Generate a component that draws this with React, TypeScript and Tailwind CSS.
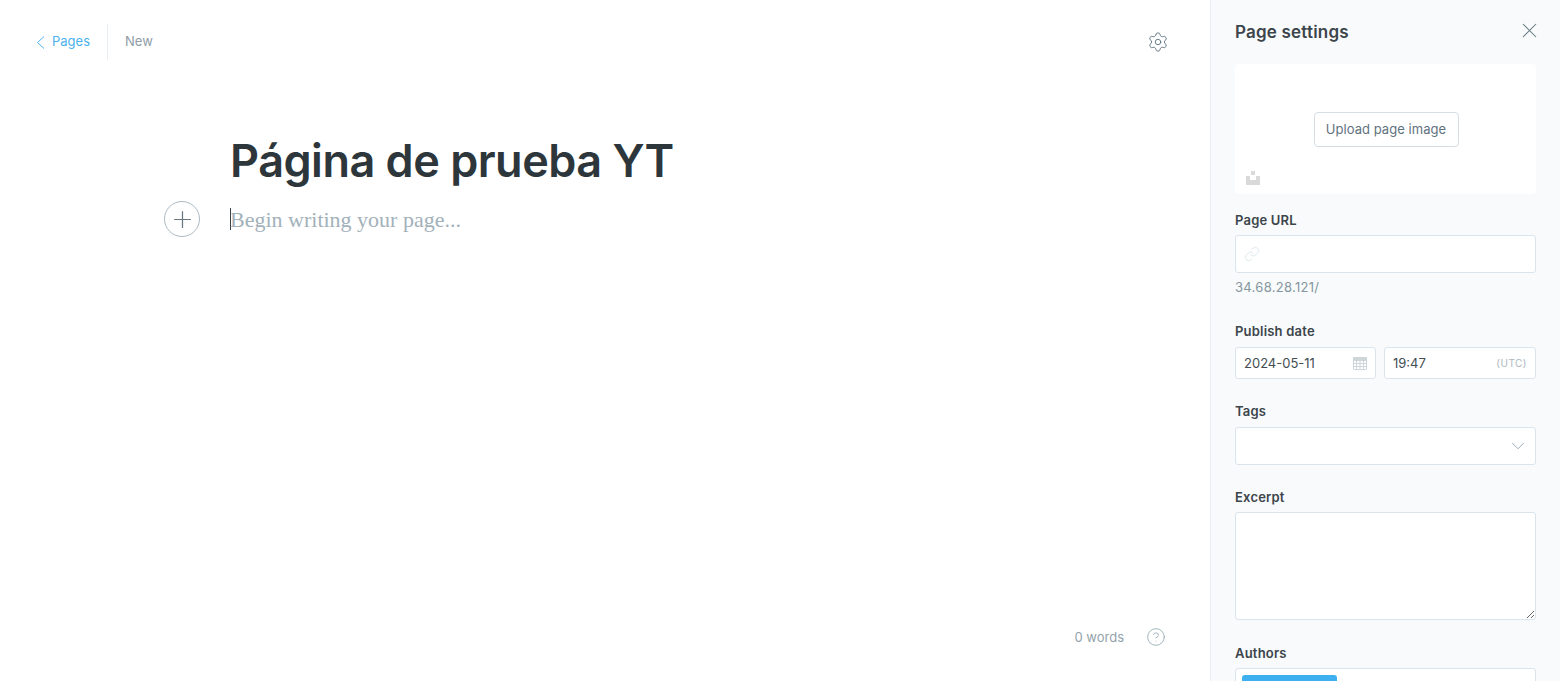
import React from 'react';
import { ChevronDown, Plus, X, Settings, Link, CircleHelp } from 'lucide-react';

const BackArrow = () => (
  <svg width="9" height="13" viewBox="0 0 9 13" className="ml-[4px] mr-[7px] text-[#4db2ec]">
    <path d="M8 .5 1.5 6.5 8 12.5" fill="none" stroke="currentColor" strokeWidth="1" />
  </svg>
);

const CalendarGrid = () => (
  <svg width="14" height="14" viewBox="0 0 14 14" className="text-[#cfd6da]">
    <path d="M.5 2.5h13v11H.5z" fill="none" stroke="currentColor" />
    <path d="M0 1h14v4H0z" fill="currentColor" />
    <path d="M3.5 5v8M7 5v8M10.5 5v8M1 7.5h12M1 10.5h12" fill="none" stroke="currentColor" strokeWidth="1" />
  </svg>
);

const UploadMark = () => (
  <svg width="14" height="14" viewBox="0 0 14 14">
    <path d="M5 0h4v4H5zM0 5h4v4h6V5h4v9H0z" fill="#d9d9d9" />
  </svg>
);

const Label = ({ children }: { children: React.ReactNode }) => (
  <label className="block text-[13px] leading-[16px] font-semibold text-[#3c454b] tracking-[0.2px]">{children}</label>
);

const App: React.FC = () => {
  return (
    <div className="flex h-[681px] overflow-hidden bg-white font-['Inter',sans-serif]">
      <div className="flex-1 flex flex-col min-w-0">
        <header className="h-[84px] flex items-start justify-between pt-[24px] pl-[32px] pr-[41px] shrink-0">
          <div className="flex items-center h-[36px]">
            <a className="flex items-center text-[13px] text-[#4db2ec] pr-[17px] border-r border-[#e8eef2] h-[36px]">
              <BackArrow />
              Pages
            </a>
            <span className="text-[13px] text-[#8e9ca5] pl-[17px]">New</span>
          </div>
          <button className="h-[36px] flex items-center text-[#5f7480]">
            <Settings size={22} strokeWidth={1} />
          </button>
        </header>

        <main className="flex-1 relative pl-[230px] pr-[40px] pt-[45px]">
          <h1 className="text-[45px] leading-[64px] font-semibold text-[#2d363b] tracking-[-0.5px]">Página de prueba YT</h1>
          <div className="relative mt-[15px] h-[22px] flex items-center border-l border-[#394047]">
            <span className="ml-[-1px] font-['Liberation_Serif',serif] text-[22px] text-[#a2b1ba]">Begin writing your page...</span>
            <button className="absolute left-[-67px] top-[-7px] w-[36px] h-[36px] rounded-full border border-[#abbac3] flex items-center justify-center text-[#66777f] bg-white">
              <Plus size={27} strokeWidth={1.1} />
            </button>
          </div>
        </main>

        <footer className="h-[48px] flex items-start justify-end pr-[45px] shrink-0">
          <span className="text-[13px] leading-[16px] text-[#93a3ac] mr-[22px] mt-[-4px]">0 words</span>
          <CircleHelp size={20} strokeWidth={1} className="text-[#93a7b2] mt-[-6px] mr-[-1px]" />
        </footer>
      </div>

      <aside className="w-[350px] shrink-0 bg-[#f8fafb] border-l border-[#e8f0f6] pl-[24px] pr-[24px] overflow-hidden">
        <div className="h-[64px] flex items-start justify-between pt-[21px]">
          <h2 className="text-[17px] leading-[22px] font-semibold text-[#3c454b] tracking-[0.2px]">Page settings</h2>
          <X size={25} strokeWidth={1} className="text-[#66777f] mt-[-3px] mr-[-6px]" />
        </div>

        <div className="relative h-[130px] bg-white rounded-[4px] flex items-center justify-center">
          <button className="ml-[1px] w-[145px] h-[35px] bg-white border border-[#d3dee6] rounded-[4px] text-[13px] leading-[31px] text-[#5f727e] tracking-[0.05px]">Upload page image</button>
          <div className="absolute left-[11px] bottom-[9px]"><UploadMark /></div>
        </div>

        <div className="mt-[18px]">
          <Label>Page URL</Label>
          <div className="mt-[7px] h-[38px] bg-white border border-[#d9e4ec] rounded-[3px] flex items-center pl-[8px]">
            <Link size={16} strokeWidth={1.1} className="text-[#d3dfe6]" />
          </div>
          <p className="mt-[6px] text-[13px] leading-[16px] text-[#84969f] tracking-[0.3px]">34.68.28.121/</p>
        </div>

        <div className="mt-[28px]">
          <Label>Publish date</Label>
          <div className="mt-[8px] flex gap-[8px]">
            <div className="w-[141px] h-[32px] bg-white border border-[#d9e4ec] rounded-[3px] flex items-center justify-between pl-[8px] pr-[8px] text-[13px] text-[#434d53]">
              <span className="pt-[1px]">2024-05-11</span>
              <CalendarGrid />
            </div>
            <div className="flex-1 h-[32px] bg-white border border-[#d9e4ec] rounded-[3px] flex items-center justify-between pl-[8px] pr-[8px] text-[13px] text-[#434d53]">
              <span className="pt-[1px]">19:47</span>
              <span className="text-[10px] tracking-[0.5px] text-[#abb7be]">(UTC)</span>
            </div>
          </div>
        </div>

        <div className="mt-[24px]">
          <Label>Tags</Label>
          <div className="mt-[8px] h-[38px] bg-white border border-[#d9e4ec] rounded-[3px] flex items-center justify-end pr-[6px]">
            <ChevronDown size={22} strokeWidth={0.9} className="text-[#8b9ca6]" />
          </div>
        </div>

        <div className="mt-[24px]">
          <Label>Excerpt</Label>
          <textarea className="block mt-[7px] w-full h-[108px] bg-white border border-[#d9e4ec] rounded-[3px] outline-none" />
        </div>

        <div className="mt-[25px]">
          <Label>Authors</Label>
          <div className="mt-[7px] h-[40px] bg-white border border-[#d9e4ec] rounded-[3px] pl-[6px] pt-[6px]">
            <div className="w-[95px] h-[24px] bg-[#3eb0ef] rounded-[3px]" />
          </div>
        </div>
      </aside>
    </div>
  );
};

export default App;
